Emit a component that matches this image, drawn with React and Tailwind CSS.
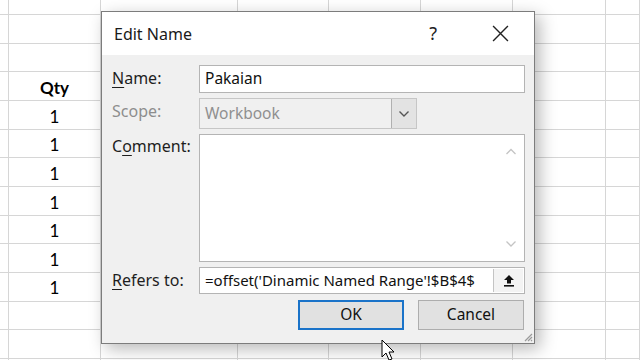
import React from "react";

const cols = ["w-[9px]", "w-[92px]", "w-[137px]", "w-[91px]", "w-[92px]", "w-[92px]", "w-[93px]", "flex-1"];

function Row({ h, children }) {
  return (
    <div className={`flex ${h}`}>
      {cols.map((c, i) => (
        <div key={i} className={`${c} shrink-0 border-r border-b border-[#d6d6d6] flex items-center justify-center`}>
          {i === 1 ? children : null}
        </div>
      ))}
    </div>
  );
}

function Sheet() {
  const rows = [];
  rows.push(<Row key="t" h="h-[15px]" />);
  rows.push(<Row key="a" h="h-[28.67px]" />);
  rows.push(<Row key="b" h="h-[28.67px]" />);
  rows.push(
    <Row key="q" h="h-[28.67px]">
      <span className="font-bold text-[17px] text-black pt-[4px]">Qty</span>
    </Row>
  );
  for (let i = 0; i < 7; i++) {
    rows.push(
      <Row key={"v" + i} h="h-[28.67px]">
        <span className="text-[17px] text-black pt-[3px]">1</span>
      </Row>
    );
  }
  for (let i = 0; i < 3; i++) rows.push(<Row key={"e" + i} h="h-[28.67px]" />);
  return <div className="bg-white" style={{ fontFamily: "Lato, 'Open Sans', sans-serif" }}>{rows}</div>;
}

function Label({ children, gray, pt = "pt-[1px]" }) {
  return (
    <div className={`w-[87px] shrink-0 ${pt} text-[16px] ${gray ? "text-[#8d8d8d]" : "text-[#1e1e1e]"}`}>{children}</div>
  );
}

function Dialog() {
  return (
    <div
      className="absolute left-[101px] top-[11px] w-[434px] h-[333px] border border-[#7c7c7c] bg-[#f0f0f0] shadow-[5px_5px_16px_rgba(0,0,0,0.28)] flex flex-col"
      style={{ fontFamily: "'Noto Sans', 'Open Sans', sans-serif" }}
    >
      <div className="h-[43px] bg-white flex items-center pl-[12px] pr-[25px] shrink-0">
        <span className="text-[16px] text-[#1a1a1a] flex-1">Edit Name</span>
        <span className="text-[18px] text-[#222] mr-[55px]">?</span>
        <svg width="17" height="17" viewBox="0 0 16 16">
          <path d="M1 1 L15 15 M15 1 L1 15" stroke="#222" strokeWidth="1.3" fill="none" />
        </svg>
      </div>
      <div className="flex-1 flex flex-col pl-[10px] pr-[9px] pt-[10px] relative">
        <div className="flex">
          <Label>
            <u className="underline-offset-[3px]">N</u>ame:
          </Label>
          <div className="flex-1 h-[28px] bg-white border border-[#b4b4b4] flex items-center px-[5px] text-[15.5px] text-[#111]">
            Pakaian
          </div>
        </div>
        <div className="flex mt-[5px]">
          <Label gray>Scope:</Label>
          <div className="w-[218px] h-[31px] border border-[#c6c6c6] bg-[#f0f0f0] flex items-stretch">
            <div className="flex-1 flex items-center px-[5px] text-[15.5px] text-[#8f8f8f]">Workbook</div>
            <div className="w-[25px] bg-[#e3e3e3] border-l border-[#b0b0b0] flex items-center justify-center">
              <svg width="12" height="8" viewBox="0 0 12 8">
                <path d="M1.5 1.5 L6 6 L10.5 1.5" stroke="#555" strokeWidth="1.4" fill="none" />
              </svg>
            </div>
          </div>
        </div>
        <div className="flex mt-[5px]">
          <Label pt="pt-0">
            C<u className="underline-offset-[3px]">o</u>mment:
          </Label>
          <div className="flex-1 h-[128px] bg-white border border-[#b4b4b4] flex justify-end">
            <div className="w-[26px] flex flex-col items-center justify-between py-[13px]">
              <svg width="12" height="8" viewBox="0 0 12 8">
                <path d="M1.5 6 L6 1.5 L10.5 6" stroke="#c4c4c4" strokeWidth="1.3" fill="none" />
              </svg>
              <svg width="12" height="8" viewBox="0 0 12 8">
                <path d="M1.5 1.5 L6 6 L10.5 1.5" stroke="#c4c4c4" strokeWidth="1.3" fill="none" />
              </svg>
            </div>
          </div>
        </div>
        <div className="flex mt-[5px]">
          <Label>
            <u className="underline-offset-[3px]">R</u>efers to:
          </Label>
          <div className="flex-1 h-[27px] bg-white border border-[#b4b4b4] flex items-stretch overflow-hidden">
            <div className="flex-1 overflow-hidden whitespace-nowrap flex items-center pl-[5px] text-[15px] text-[#111]">
              =offset('Dinamic Named Range'!$B$4$
            </div>
            <div className="w-[30px] shrink-0 bg-[#f3f3f3] border-l border-[#c4c4c4] m-[1px] flex items-center justify-center">
              <svg width="12" height="13" viewBox="0 0 12 13">
                <path d="M6 1 L11 6 L8 6 L8 9.5 L4 9.5 L4 6 L1 6 Z" fill="#111" />
                <rect x="1" y="11" width="10" height="1.6" fill="#111" />
              </svg>
            </div>
          </div>
        </div>
        <div className="flex justify-end mt-[6px] gap-[14px] pr-[1px]">
          <div className="w-[106px] h-[30px] border-2 border-[#1a73c9] bg-[#e1e1e1] flex items-center justify-center text-[15.5px] text-[#111]">
            OK
          </div>
          <div className="w-[106px] h-[30px] border border-[#adadad] bg-[#e1e1e1] flex items-center justify-center text-[15.5px] text-[#111]">
            Cancel
          </div>
        </div>
        <svg className="absolute right-[1px] bottom-[1px]" width="10" height="10" viewBox="0 0 10 10">
          <path d="M9 2 L2 9 M9 5 L5 9 M9 8 L8 9" stroke="#9a9a9a" strokeWidth="1.2" />
        </svg>
      </div>
    </div>
  );
}

export default function App() {
  return (
    <div className="relative w-[640px] h-[360px] overflow-hidden bg-white">
      <Sheet />
      <Dialog />
      <svg className="absolute left-[381px] top-[339px]" width="16" height="24" viewBox="0 0 16 24">
        <path d="M1 1 L1 18 L5 14 L8 21 L11 20 L8 13 L13 13 Z" fill="#fff" stroke="#000" strokeWidth="1" />
      </svg>
    </div>
  );
}
